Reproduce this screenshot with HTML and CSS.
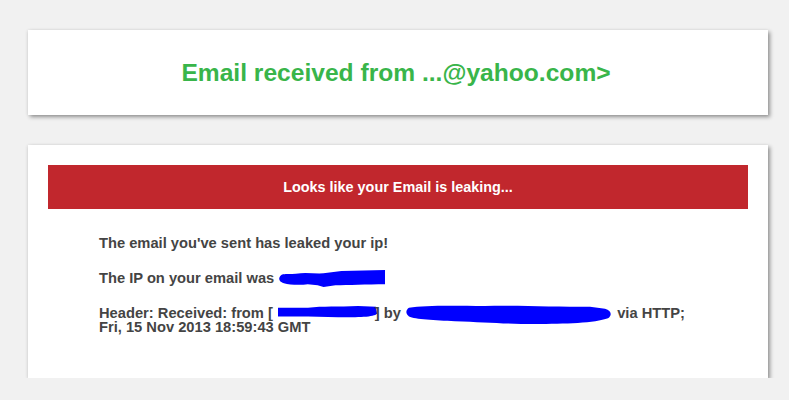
FILE: index.html
```html
<!DOCTYPE html>
<html>
<head>
<meta charset="utf-8">
<link rel="stylesheet" href="styles.css">
</head>
<body>
<div class="card title-card">
  <h1 class="title">Email received from ...@yahoo.com&gt;</h1>
</div>
<div class="card body-card">
  <div class="banner">Looks like your Email is leaking...</div>
  <div class="content">
    <p>The email you've sent has leaked your ip!</p>
    <p>The IP on your email was <svg class="blob blob-ip" viewBox="0 0 110 20" preserveAspectRatio="none"><path d="M2 8 C4 4 10 6 18 5 C30 3 40 6 50 4 L64 2 L108 1 L108 16 C90 16 70 17 58 17 L46 19 L40 17 L30 16 C24 17 12 17 6 15 C2 14 0 11 2 8 Z"/></svg></p>
    <p>Header: Received: from [<svg class="blob blob-a" viewBox="0 0 100 16" preserveAspectRatio="none"><path d="M0 3 L30 3 C45 1 60 2 80 1 L98 2 L99 10 C96 14 80 14 60 14 L30 13 L0 13 Z"/></svg>] by <svg class="blob blob-b" viewBox="0 0 208 22" preserveAspectRatio="none"><path d="M4 4 C20 1 50 2 80 2 C110 1 150 3 185 3 L200 5 C207 7 207 12 203 15 C190 20 160 21 130 21 C100 21 80 19 50 18 C30 17 10 16 4 13 C0 10 1 6 4 4 Z"/></svg> via HTTP;<br>Fri, 15 Nov 2013 18:59:43 GMT</p>
  </div>
</div>
</body>
</html>
```

FILE: styles.css
```css
html, body {
  margin: 0;
  padding: 0;
  background: #f1f1f1;
  font-family: "Liberation Sans", Arial, sans-serif;
}

body {
  padding-top: 30px;
}

.card {
  background: #ffffff;
  margin: 0 21px 0 28px;
  box-shadow: 2px 2px 4px rgba(0, 0, 0, 0.4), -1px 0 3px rgba(0, 0, 0, 0.06);
}

.title-card {
  height: 85px;
  display: flex;
  align-items: center;
  justify-content: center;
  padding-right: 4px;
  box-sizing: border-box;
}

.title {
  margin: 0;
  font-size: 24.6px;
  line-height: 28px;
  font-weight: bold;
  color: #39b54a;
}

.body-card {
  margin-top: 30px;
  height: 233px;
  padding: 20px;
  box-sizing: border-box;
}

.banner {
  background: #c1272d;
  color: #ffffff;
  height: 44px;
  display: flex;
  align-items: center;
  justify-content: center;
  font-size: 14.4px;
  font-weight: bold;
}

.content {
  padding: 27px 0 0 51px;
  color: #444444;
  font-size: 14.7px;
  font-weight: bold;
  line-height: 14px;
}

.content p {
  margin: 0 0 21px;
}

.blob {
  display: inline-block;
  fill: #0000ff;
  margin-top: -10px;
  margin-bottom: -10px;
}

.blob-ip {
  width: 109px;
  height: 19px;
  vertical-align: 5px;
}

.blob-a {
  width: 100px;
  height: 14px;
  vertical-align: 9px;
  margin-left: 5px;
  margin-right: -3px;
}

.blob-b {
  width: 208px;
  height: 21px;
  vertical-align: 3px;
}
```
